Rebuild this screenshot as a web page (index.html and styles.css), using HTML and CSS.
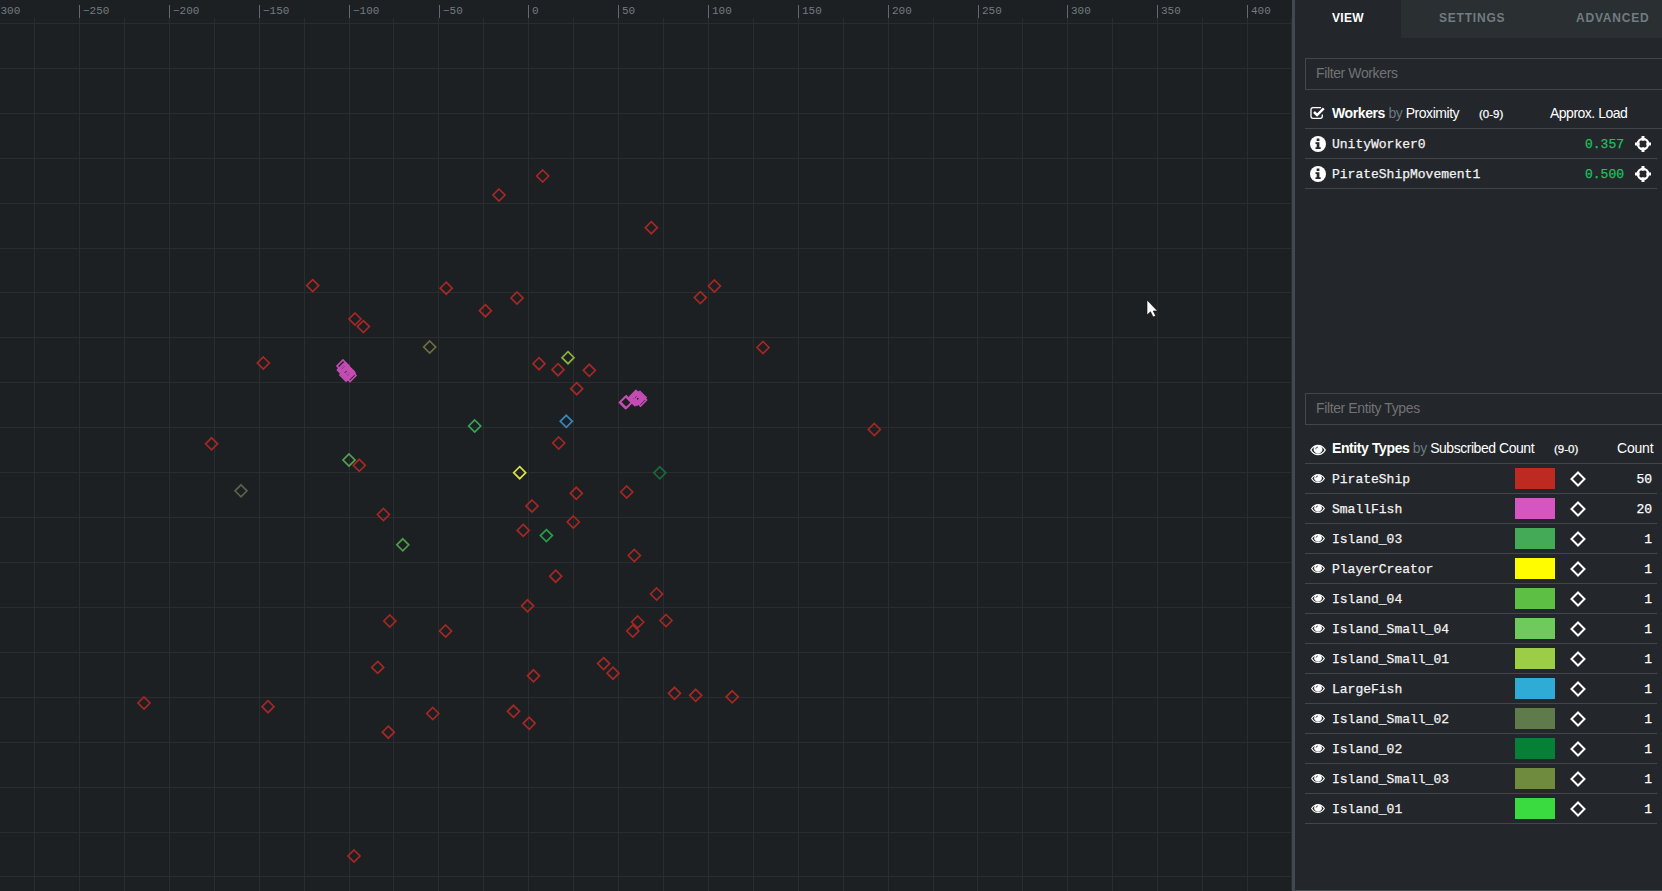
FILE: index.html
```
<!DOCTYPE html>
<html lang="en">
<head>
<meta charset="utf-8">
<title>Inspector</title>
<link rel="stylesheet" href="styles.css">
</head>
<body>
<svg class="defs" aria-hidden="true">
  <symbol id="eye" viewBox="0 0 16 12"><path fill="currentColor" fill-rule="evenodd" d="M0 6C2 2.500 4.800 .8 8 .8s6 1.700 8 5.200c-2 3.500-4.800 5.200-8 5.200S2 9.500 0 6zM1.500 6C3.200 8.700 5.400 10 8 10s4.800-1.300 6.500-4C13.700 4.700 12.800 3.700 11.600 3A4.300 4.300 0 1 1 4.400 3C3.200 3.700 2.300 4.700 1.500 6z"/><path d="M5.700 5.200A2.400 2.400 0 0 1 8 3" fill="none" stroke="#23262b" stroke-width=".8"/></symbol>
  <symbol id="info" viewBox="0 0 16 16"><circle cx="8" cy="8" r="8" fill="currentColor"/><path fill="#23262b" d="M6.700 2.600h2.700v2.300H6.700zM5.500 6.300h3.900v5h1.300v1.600H5.500v-1.600h1.200V7.900H5.500z"/></symbol>
  <symbol id="target" viewBox="0 0 16 16"><circle cx="8" cy="8" r="5.200" fill="none" stroke="currentColor" stroke-width="2.300"/><path d="M8 0v4.700M8 11.300V16M0 8h4.700M11.300 8H16" stroke="currentColor" stroke-width="3"/></symbol>
  <symbol id="check" viewBox="0 0 15 14"><path d="M11 1.700H3Q1 1.700 1 3.700v6.600q0 2 2 2h7.300q2 0 2-2V8.500" fill="none" stroke="currentColor" stroke-width="1.300"/><path d="M4 6l3.100 3.100L13.800 2.400" fill="none" stroke="currentColor" stroke-width="2.500"/></symbol>
  <symbol id="rhomb" viewBox="0 0 16 16"><path d="M8 1.500L14.500 8 8 14.500 1.500 8z" fill="none" stroke="currentColor" stroke-width="2"/></symbol>
</svg>
<div class="app">
  <main class="world"><svg class="map" id="map" width="1292" height="891"></svg></main>
  <aside class="panel">
    <nav class="tabs"><a class="tab active">VIEW</a><a class="tab settings">SETTINGS</a><a class="tab advanced">ADVANCED</a></nav>
    <section class="workers">
      <input class="filter" placeholder="Filter Workers">
      <div class="head"><svg class="i-check"><use href="#check"/></svg><span class="title"><b>Workers</b> <i>by</i> Proximity</span><span class="range range-w">(0-9)</span><span class="load-head">Approx. Load</span></div>
      <div class="row"><svg class="i16"><use href="#info"/></svg><span class="name">UnityWorker0</span><span class="load">0.357</span><svg class="i16"><use href="#target"/></svg></div>
      <div class="row"><svg class="i16"><use href="#info"/></svg><span class="name">PirateShipMovement1</span><span class="load">0.500</span><svg class="i16"><use href="#target"/></svg></div>
    </section>
    <section class="types" id="types">
      <input class="filter" placeholder="Filter Entity Types">
      <div class="head"><svg class="i-eye-lg"><use href="#eye"/></svg><span class="title title-e"><b>Entity Types</b> <i>by</i> Subscribed Count</span><span class="range range-e">(9-0)</span><span class="count-head">Count</span></div>
    </section>
  </aside>
</div>
<svg class="cursor" width="14" height="22" viewBox="0 0 14 22"><path d="M1 1v15l3.500-3.200 2.600 5.200 2.600-1.200-2.500-4.800H11.500z" fill="#fff" stroke="#0b0c0d" stroke-width=".6"/></svg>
<script src="app.js"></script>
</body>
</html>
```
FILE: styles.css
```
* { box-sizing: border-box; }
body { margin: 0; background: #1c1f22; color: #fff; font: 14px "Liberation Sans", Arial, sans-serif; overflow: hidden; }
.defs { position: absolute; width: 0; height: 0; }
.app { display: flex; width: 1662px; height: 891px; overflow: hidden; }
.world { width: 1292px; flex: none; background: #1c2023; }
.map { display: block; }
.grid { stroke: #2a2d30; stroke-width: 1; shape-rendering: crispEdges; }
.tick { stroke: #65696b; stroke-width: 1; shape-rendering: crispEdges; }
.scale { fill: #737b80; font: 11px "Liberation Mono", monospace; }
.mark { fill: none; stroke-width: 1.7; }
.panel { width: 370px; flex: none; border-left: 3px solid #414850; border-bottom: 1px solid #414850; background: #23262b; overflow: hidden; }
.tabs { display: flex; height: 38px; width: 390px; background: #2a2f31; }
.tab { flex: none; width: 106px; padding-left: 37px; line-height: 37px; font-size: 12px; font-weight: bold; letter-spacing: .8px; color: #717c83; }
.tab.active { background: #23262b; color: #fff; letter-spacing: .3px; }
.tab.settings { width: 138px; padding-left: 38px; }
.tab.advanced { width: 146px; }
.workers, .types { padding-left: 10px; }
.workers { height: 335px; padding-top: 20px; }
.types { padding-top: 20px; }
.filter { display: block; width: 370px; height: 32px; padding: 0 10px 2px; border: 1px solid #43474c; background: transparent; color: #fff; font: 14px "Liberation Sans", Arial, sans-serif; letter-spacing: -.38px; outline: 0; }
.filter::placeholder { color: #717274; }
.head { display: flex; align-items: center; height: 39px; padding-left: 5px; padding-top: 8px; border-bottom: 1px solid #43474c; white-space: nowrap; }
.title { width: 147px; margin-left: 7px; letter-spacing: -.46px; }
.title b { letter-spacing: -.4px; }
.title-e { width: 222px; }
.title i { font-style: normal; color: #6e7881; }
.range { width: 53px; padding-top: 1px; font-size: 11.5px; -webkit-text-stroke: .25px; }
.range-e { width: 63px; }
.load-head { margin-left: 18px; letter-spacing: -.5px; }
.count-head { letter-spacing: -.2px; }
.row { display: flex; align-items: center; width: 352px; height: 30px; padding: 0 6px 0 5px; border-bottom: 1px solid #43474c; font: 13px "Liberation Mono", monospace; white-space: nowrap; }
.name, .load, .count { padding-top: 1px; }
.name { flex: 1; margin-left: 6px; color: #f3f3f3; -webkit-text-stroke: .25px; }
.load { width: 50px; color: #16c65c; -webkit-text-stroke: .25px; }
.i16 { width: 16px; height: 16px; flex: none; }
.i-check { width: 15px; height: 14px; flex: none; }
.i-eye-lg { width: 16px; height: 12px; flex: none; margin: 3px -1px 0 0; }
.i-eye { width: 14px; height: 11px; flex: none; margin: 0 1px; }
.swatch { width: 40px; height: 21px; }
.shape { width: 16px; height: 16px; margin-left: 15px; }
.count { width: 66px; margin-right: -1px; text-align: right; -webkit-text-stroke: .25px; }
.cursor { position: absolute; left: 1146px; top: 299px; }
```
FILE: app.js
```
const NS = 'http://www.w3.org/2000/svg';
const map = document.getElementById('map');
function add(tag, cls, attrs, text) {
  const el = document.createElementNS(NS, tag);
  el.setAttribute('class', cls);
  for (const k in attrs) el.setAttribute(k, attrs[k]);
  if (text) el.textContent = text;
  map.appendChild(el);
}
const step = 44.92;
for (let i = 0; i < 29; i++) {
  const x = Math.min(Math.floor(34.6 + i * step), 1291) + .5;
  add('line', 'grid', { x1: x, x2: x, y1: 18, y2: 891 });
}
for (let i = 0; i < 20; i++) {
  const y = Math.floor(23.45 + i * step) + .5;
  add('line', 'grid', { x1: 0, x2: 1292, y1: y, y2: y });
}
add('text', 'scale', { x: .5, y: 14 }, '300');
for (let v = -250; v <= 400; v += 50) {
  const x = Math.floor(79.7 + (v + 250) / 25 * step) + .5;
  add('line', 'tick', { x1: x, x2: x, y1: 5, y2: 18 });
  add('text', 'scale', { x: x + 3.5, y: 14 }, String(v).replace('-', '−'));
}
const marks = {
  '#a52824': [[542.7,176],[499,195],[651.3,227.7],[312.7,285.6],[446.2,288.2],[517,298],[485.4,310.7],[714.4,286],[700.3,297.6],[763,347.5],[355,319],[363.4,326.6],[263.3,363],[539,363.7],[558,369.7],[589.3,370.3],[576.7,388.7],[558.7,443],[359.3,465.3],[576.3,493.3],[626.7,492],[532,506],[874.3,429.5],[211.6,443.8],[383.4,514.5],[573.3,522],[523.2,530.4],[634.3,555.5],[555.7,576.2],[656.6,594],[527.6,605.8],[389.8,621],[445.6,631],[637.7,622],[666,620.5],[632.8,631],[377.7,667.4],[533.5,675.8],[603.6,663.6],[613,673.2],[674.5,693.3],[695.7,695.3],[732.2,696.8],[144,703],[268,706.700],[432.8,713.5],[513.5,711.3],[529.2,723.3],[388.3,732.2],[354,856]],
  '#c44db3': [[343,366],[343.5,370],[345,371],[346,372.5],[347,374],[346,375],[348,371.5],[349,373],[350,375.5],[344.5,369],[625.5,402.5],[626.5,402],[634.5,399],[635.5,398],[636,396.500],[635,399.5],[637,399],[640,397.500],[640.500,400],[638,398]],
  '#35a854': [[474.7,426]], '#55a255': [[349,460]], '#8fae42': [[568,357.7]],
  '#6f6f40': [[429.7,347]], '#3a86bc': [[566.3,421.3]], '#d8e240': [[519.7,472.7]],
  '#176a37': [[659.8,472.8]], '#5a604a': [[241,490.8]], '#4c9c48': [[402.8,544.8]], '#22a048': [[546.4,535.6]]
};
for (const color in marks)
  for (const [x, y] of marks[color])
    add('path', 'mark', { stroke: color, d: `M${x} ${y - 6}l6 6-6 6-6-6z` });

const types = [['PirateShip','#bd2a22',50],['SmallFish','#d556c0',20],['Island_03','#45aa57',1],['PlayerCreator','#fffc00',1],['Island_04','#5dc044',1],['Island_Small_04','#6fc95d',1],['Island_Small_01','#9ccd47',1],['LargeFish','#2facd6',1],['Island_Small_02','#5f7b4b',1],['Island_02','#068037',1],['Island_Small_03','#6f8c3e',1],['Island_01','#3adb41',1]];
const list = document.getElementById('types');
for (const [name, color, count] of types)
  list.insertAdjacentHTML('beforeend', `<div class="row"><svg class="i-eye"><use href="#eye"/></svg><span class="name">${name}</span><span class="swatch" style="background:${color}"></span><svg class="shape"><use href="#rhomb"/></svg><span class="count">${count}</span></div>`);
```
